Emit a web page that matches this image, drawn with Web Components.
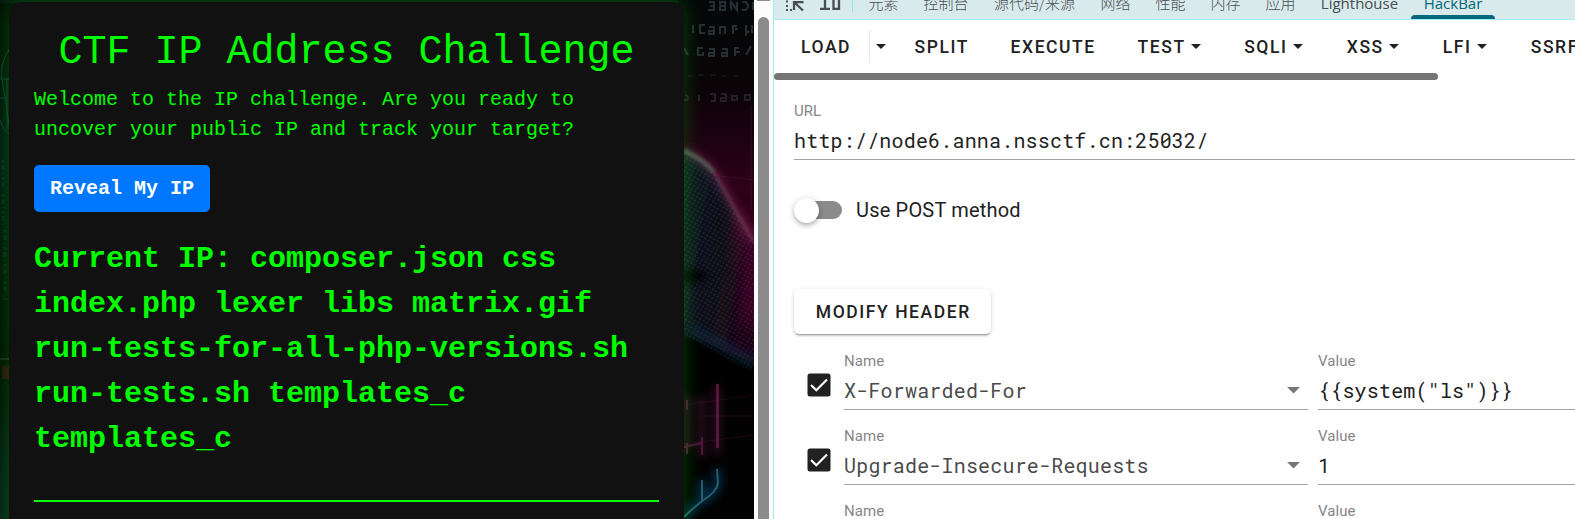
<!DOCTYPE html>
<html lang="zh">
<head>
<meta charset="utf-8">
<title>CTF IP Address Challenge</title>
<style>
html,body{margin:0;height:519px;overflow:hidden;background:#fff}
</style>
</head>
<body>
<split-view>
  <ctf-page slot="page">
    <ctf-card>
      <span slot="title">CTF IP Address Challenge</span>
      <span slot="intro">Welcome to the IP challenge. Are you ready to uncover your public IP and track your target?</span>
      <span slot="action">Reveal My IP</span>
      <span slot="result">Current IP: composer.json css index.php lexer libs matrix.gif run-tests-for-all-php-versions.sh run-tests.sh templates_c templates_c</span>
    </ctf-card>
  </ctf-page>
  <dev-tools slot="tools">
    <dev-tabs slot="tabs"></dev-tabs>
    <hack-toolbar>
      <hack-button split>LOAD</hack-button>
      <hack-button style="width:96px">SPLIT</hack-button>
      <hack-button style="width:127px">EXECUTE</hack-button>
      <hack-button style="width:106.6px" menu>TEST</hack-button>
      <hack-button style="width:102.6px" menu>SQLI</hack-button>
      <hack-button style="width:96px" menu>XSS</hack-button>
      <hack-button style="width:88px" menu>LFI</hack-button>
      <hack-button style="width:110px" menu>SSRF</hack-button>
    </hack-toolbar>
    <hack-form>
      <hack-field label="URL" style="height:57px">http://node6.anna.nssctf.cn:25032/</hack-field>
      <hack-switch>Use POST method</hack-switch>
      <raised-button>MODIFY HEADER</raised-button>
      <header-row name="X-Forwarded-For" value='{{system("ls")}}'></header-row>
      <header-row name="Upgrade-Insecure-Requests" value="1"></header-row>
      <header-row name="" value=""></header-row>
    </hack-form>
  </dev-tools>
</split-view>

<script>
const define = (name, html, setup) => customElements.define(name, class extends HTMLElement {
  constructor() {
    super();
    const t = document.createElement('template');
    t.innerHTML = html;
    this.attachShadow({ mode: 'open' }).append(t.content.cloneNode(true));
  }
  connectedCallback() { if (setup) setup(this, this.shadowRoot); }
});

define('split-view', `
<style>
:host{display:flex;width:1575px;height:519px;overflow:hidden}
.gutter{width:15px;padding-left:4px;flex:none;background:#fcfcfc;display:flex;flex-direction:column;gap:16px}
.cap{height:1px;width:13px;margin-left:-1px;background:#8b8b8b}
.thumb{width:11px;flex:1;border-radius:6px 6px 0 0;background:#8b8b8b}
</style>
<slot name="page"></slot><div class="gutter"><div class="cap"></div><div class="thumb"></div></div><slot name="tools"></slot>`);

define('ctf-page', `
<style>
:host{display:grid;width:754px;height:519px;flex:none;overflow:hidden;background:#020302}
svg,.content{grid-area:1/1}
.content{padding:2px 70px 0 9px;min-height:0}
</style>
<svg width="754" height="519" viewBox="0 0 754 519">
  <defs>
    <filter id="soft" filterUnits="userSpaceOnUse" x="-10" y="-10" width="780" height="540"><feGaussianBlur stdDeviation=".7"/></filter>
    <filter id="b1" filterUnits="userSpaceOnUse" x="640" y="80" width="160" height="460"><feGaussianBlur stdDeviation="1.6"/></filter>
    <filter id="b3" filterUnits="userSpaceOnUse" x="640" y="80" width="160" height="460"><feGaussianBlur stdDeviation="4"/></filter>
    <filter id="b8" filterUnits="userSpaceOnUse" x="640" y="80" width="160" height="460"><feGaussianBlur stdDeviation="9"/></filter>
    <pattern id="dots" width="4" height="4" patternUnits="userSpaceOnUse" patternTransform="rotate(30)"><circle cx="2" cy="2" r=".9" fill="#6a8796" opacity=".22"/></pattern>
    <linearGradient id="arm" x1="0" x2="1" y1="0" y2=".5"><stop offset="0" stop-color="#0a201c"/><stop offset=".45" stop-color="#0a0d1a"/><stop offset="1" stop-color="#1c0412"/></linearGradient>
    <linearGradient id="sky" x1="0" x2="0" y1="0" y2="1"><stop offset="0" stop-color="#040808"/><stop offset=".17" stop-color="#0b0407"/><stop offset=".25" stop-color="#190210"/><stop offset=".36" stop-color="#2d0118"/><stop offset=".5" stop-color="#250214"/><stop offset=".68" stop-color="#040203"/><stop offset="1" stop-color="#010201"/></linearGradient>
    <linearGradient id="left" x1="0" x2="0" y1="0" y2="1"><stop offset="0" stop-color="#020d04"/><stop offset=".3" stop-color="#031812"/><stop offset=".7" stop-color="#020d04"/><stop offset="1" stop-color="#08201d"/></linearGradient>
  </defs>
  <rect width="20" height="519" fill="url(#left)"/>
  <rect x="0" width="754" height="3" fill="#051a12"/>
  <g fill="none" stroke="#1d4c45" opacity=".65" filter="url(#soft)">
    <path d="M10 48Q-2 64 3 86T10 141M0 79H10M0 98H8M7 79V130M0 120Q4 132 10 134"/>
    <path d="M3 160v68M5 230v70" stroke-dasharray="3 2 5 3 1 3" stroke-width="3" opacity=".4"/>
    <path d="M0 359H9" stroke="#5b5030"/>
  </g>
  <rect x="2" y="366" width="7" height="13" fill="#35110d" opacity=".8" filter="url(#soft)"/>
  <rect x="678" width="76" height="519" fill="url(#sky)"/>
  <g fill="none" stroke="#46606a" stroke-width="2" opacity=".45" filter="url(#soft)">
    <path d="M709 2h5v8h-6M710 6h4M720 2h5v8h-5zM720 6h4M731 10V2l6 8V2M742 2h4q4 4 0 8h-4M753 2v8"/>
    <path d="M693 25v8M705 25h-5v8h5M709 27h5v7h-5v-3h5M720 34v-7h5v7M737 26h-4v8M735 29h3M746 25v9l3-3M752 25v8"/>
    <path d="M684 48l4 7M703 48h-5v7h5v-3M709 49h5v7h-5v-3h5M722 49h5v7h-5v-3h5M739 48h-4v8M735 52h5M746 55l5-9"/>
    <path d="M688 76h4M698 75h6M711 75h5M722 76h4M734 76h4" opacity=".35"/>
    <path d="M685 95q5 1 2 5h-3M699 95v6M710 94h5v7h-4M721 94h5v7h-5v-3h5M732 96h5v4h-5zM745 95h5v5h-5z" opacity=".7"/>
  </g>
  <path d="M684 150Q705 158 715 174L738 215L754 242V362L684 336z" fill="url(#arm)" filter="url(#soft)"/>
  <path d="M740 215q14 40 12 110" fill="none" stroke="#5d0530" stroke-width="14" filter="url(#b8)" opacity=".75"/>
  <path d="M684 335L715 346L754 374V395H684z" fill="#030303" filter="url(#b3)"/>
  <path d="M684 150Q705 158 715 174L738 215L754 242V372L715 352L684 334z" fill="url(#dots)"/>
  <ellipse cx="692" cy="276" rx="16" ry="6" fill="#000" filter="url(#b3)" opacity=".9"/>
  <path d="M684 151Q705 160 715 174Q734 208 754 242" fill="none" stroke="#8d3a68" stroke-width="9" opacity=".4" filter="url(#b3)"/>
  <path d="M684 151Q705 160 715 174Q734 208 754 242" fill="none" stroke="#8d5674" stroke-width="3" opacity=".4" filter="url(#b1)"/>
  <path d="M684 150Q703 159 714 172" fill="none" stroke="#51835e" stroke-width="5" opacity=".4" filter="url(#b1)"/>
  <path d="M692 330L720 344L754 363" fill="none" stroke="#0e2c42" stroke-width="9" filter="url(#b3)" opacity=".7"/>
  <path d="M712 175L754 180M751 105V210" stroke="#712048" fill="none" opacity=".3"/>
  <g fill="none" stroke="#a92c7c" opacity=".6">
    <path d="M717 385V455M702 395V457M687 395V450" stroke-width="6" filter="url(#b3)" opacity=".5"/>
    <path d="M717.5 384V448" stroke-width="2.4" filter="url(#soft)"/>
    <path d="M702 437V455M687 400v10M687 443v11M684 447L702 443" stroke-width="2" opacity=".7" filter="url(#soft)"/>
    <path d="M684 405L754 395M700 416H754M684 444L754 435" opacity=".22"/>
  </g>
  <path d="M684 518Q690 509 702 501V480M702 501Q717 492 718 483L717 469" fill="none" stroke="#064d78" stroke-width="8" filter="url(#b3)" opacity=".6"/>
  <path d="M684 517Q692 509 702 501V480M702 501Q717 492 718 483L717 469" fill="none" stroke="#3e7f90" stroke-width="2" filter="url(#soft)" opacity=".65"/>
</svg>
<div class="content"><slot></slot></div>`);

define('ctf-card', `
<style>
:host{display:block;box-sizing:border-box;width:675px;height:560px;padding:28px 25px 25px;border-radius:12px;background:#111;color:#0f0;box-shadow:0 0 20px rgba(0,255,0,.26);font-family:"Courier New","Liberation Mono",monospace}
h1{margin:0;font-size:40px;line-height:45px;font-weight:400;text-align:center;white-space:nowrap}
p{margin:10px 0 0;font-size:20px;line-height:30px}
button{display:block;margin:20px 0 0;border:0;border-radius:5px;width:176px;height:47px;padding:0;background:#07f;color:#fff;font:bold 20px "Courier New","Liberation Mono",monospace}
h2{margin:25px 0 0;font-size:30px;line-height:45px;font-weight:700}
hr{height:2px;border:0;margin:38px 0 0;background:#0f0}
</style>
<h1><slot name="title"></slot></h1>
<p><slot name="intro"></slot></p>
<button><slot name="action"></slot></button>
<h2><slot name="result"></slot></h2>
<hr>`);

define('dev-tools', `
<style>
:host{display:block;width:801px;flex:none;border-left:1px solid #a0edf8;overflow:hidden;background:#fff;font-family:Roboto,sans-serif;color:#212121}
</style><slot name="tabs"></slot><slot></slot>`);

define('dev-tabs', `
<style>
:host{display:flex;box-sizing:border-box;height:20px;background:#d9eaec;border-bottom:1px solid #a0edf8;overflow:hidden;color:#474d50;font:15px/20px "Open Sans","Noto Sans CJK SC",sans-serif}
svg{flex:none;width:82px;height:19px}
.tab{box-sizing:border-box;flex:none;height:19px;display:flex;flex-direction:column;align-items:center;white-space:nowrap}
.tab span{margin-top:-7px}
.cjk{font-family:"Noto Sans CJK SC",sans-serif;font-weight:300}
.active{color:#00687a}
.active i{width:84px;height:4px;border-radius:4px 4px 0 0;background:#00687a;margin-top:2px;flex:none}
</style>
<svg viewBox="0 0 82 19" fill="none" stroke="#474d50"><path d="M12 1.5h2M12 6h2M12 10h2M16 10h2" stroke-width="2"/><path d="M20 10V2.2H29.5M20.5 2.5L29 10.5" stroke-width="2.2"/><path d="M46 8.8H56M51 0V9M59.5-2V8.8H65V-1.5" stroke-width="2.3"/><path d="M78.5 0V12" stroke="#8beaf5"/></svg>
<div class="tab cjk" style="width:55px"><span>元素</span></div>
<div class="tab cjk" style="width:70px"><span>控制台</span></div>
<div class="tab cjk" style="width:107px"><span>源代码/来源</span></div>
<div class="tab cjk" style="width:55px"><span>网络</span></div>
<div class="tab cjk" style="width:55px"><span>性能</span></div>
<div class="tab cjk" style="width:55px"><span>内存</span></div>
<div class="tab cjk" style="width:55px"><span>应用</span></div>
<div class="tab" style="width:103px"><span>Lighthouse</span></div>
<div class="tab active" style="width:84px"><span>HackBar</span><i></i></div>`);

define('hack-toolbar', `
<style>
:host{display:block;height:61px;overflow:hidden}
.row{display:flex;height:53px;padding-left:27px;width:1000px}
.bar{width:664px;height:7px;border-radius:4px;background:#757575}
</style><div class="row"><slot></slot></div><div class="bar"></div>`);

define('hack-button', `
<style>
:host{display:flex;flex:none;align-items:center;height:53px;white-space:nowrap}
:host([split]){width:113.6px}
span{font-size:17.5px;font-weight:500;letter-spacing:1.56px}
svg,.line{display:none}
:host([menu]) svg{display:block;margin-left:5.5px}
:host([split]) .line{display:block;width:1px;height:33px;background:#e8e8e8;margin:0 6px 0 18px}
:host([split]) svg{display:block}
</style><span><slot></slot></span><i class="line"></i><svg width="10" height="5" viewBox="0 0 10 5"><path d="M0 0H10L5 5z" fill="#212121"/></svg>`);

define('hack-form', `
<style>:host{display:block;padding:22px 0 0 20px}</style><slot></slot>`);

define('hack-field', `
<style>
:host{display:block;box-sizing:border-box;border-bottom:1px solid #a3a3a3}
label{display:block;font-size:15px;line-height:18px;height:24px;color:#868686;letter-spacing:.05px}
:host([label="URL"]) label{line-height:16px;height:23px}
.text{font:20px/28px "Roboto Mono","DejaVu Sans Mono",monospace;letter-spacing:.1875px;white-space:pre;color:#212121;height:30px}
:host([select]) .text{color:#4a4a4a}
:host([select]) .row{display:flex;justify-content:space-between;padding-right:8px}
svg{display:none}
:host([select]) svg{display:block;margin-top:11px}
</style><label></label><div class="row"><div class="text"><slot></slot></div><svg width="13" height="7" viewBox="0 0 13 7"><path d="M0 0H13L6.5 6.5z" fill="#777"/></svg></div>`,
(el, root) => { root.querySelector('label').textContent = el.getAttribute('label'); });

define('hack-switch', `
<style>
:host{display:flex;align-items:center;height:30px;margin-top:35px;font-size:20px;letter-spacing:.1875px}
.track{width:45px;height:18px;margin-left:3px;border-radius:9px;background:#8b8b8b;display:flex;align-items:center}
.thumb{width:25px;height:25px;flex:none;margin-left:-3px;border-radius:50%;background:#fff;box-shadow:0 3px 4px rgba(0,0,0,.2),0 1px 7px rgba(0,0,0,.16)}
span{margin-left:14px}
</style><div class="track"><div class="thumb"></div></div><span><slot></slot></span>`);

define('raised-button', `
<style>
:host{display:flex;box-sizing:border-box;width:197px;height:45px;margin-top:64px;padding-left:21.8px;align-items:center;border-radius:5px;background:#fff;box-shadow:0 3px 1px -2px rgba(0,0,0,.2),0 2px 2px rgba(0,0,0,.14),0 1px 5px rgba(0,0,0,.12);font-size:17.5px;font-weight:500;letter-spacing:1.56px;white-space:nowrap}
</style><slot></slot>`);

define('header-row', `
<style>
:host{display:flex;height:75px;box-sizing:border-box;padding-top:18px}
svg{flex:none;margin:21px 13px 0 13px}
hack-field{height:58px;flex:none}
.name{width:464px;margin-right:10px}
.value{width:300px}
</style>
<svg width="24" height="24" viewBox="0 0 24 24"><rect x=".5" y=".5" width="23" height="23" rx="2.5" fill="#212121"/><path d="M4 12L9.3 17.2L20 6.5" fill="none" stroke="#fff" stroke-width="2.2"/></svg>
<hack-field class="name" label="Name" select></hack-field><hack-field class="value" label="Value"></hack-field>`,
(el, root) => {
  root.querySelector('.name').textContent = el.getAttribute('name');
  root.querySelector('.value').textContent = el.getAttribute('value');
});
</script>
</body>
</html>
